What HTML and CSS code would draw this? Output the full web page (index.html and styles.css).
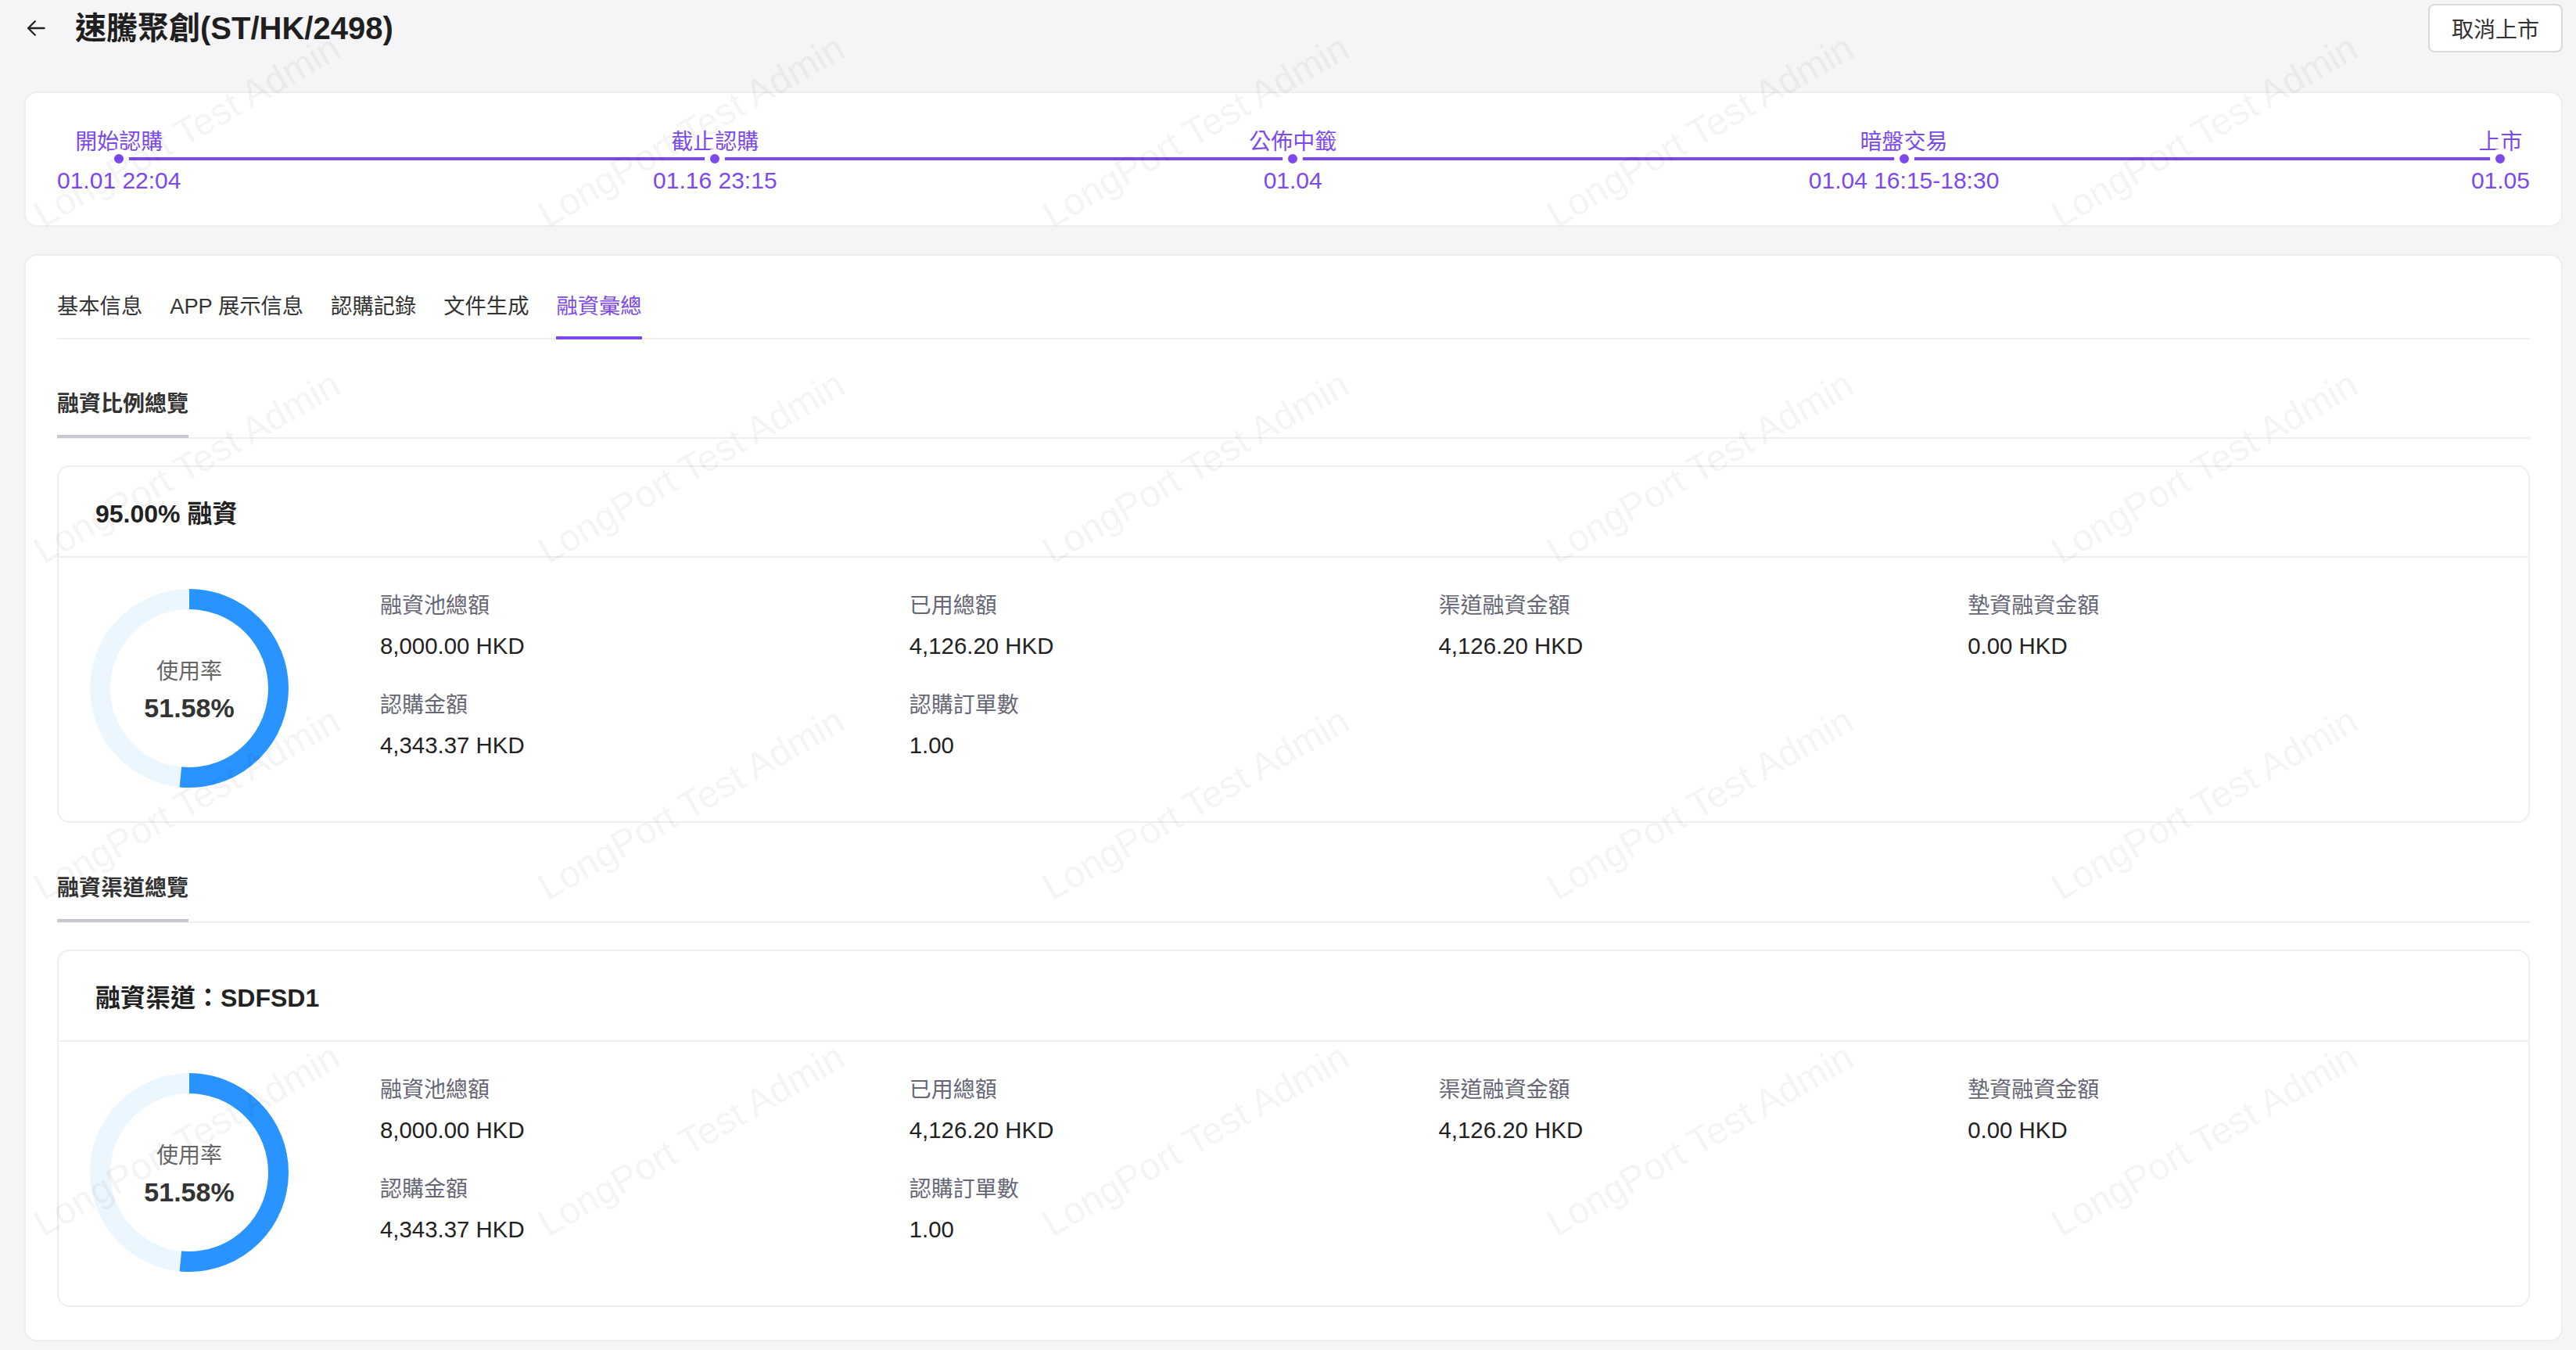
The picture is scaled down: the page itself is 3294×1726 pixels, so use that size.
FILE: index.html
```html
<!DOCTYPE html>
<html lang="zh-Hant">
<head>
<meta charset="utf-8">
<title>速騰聚創(ST/HK/2498)</title>
<link rel="stylesheet" href="styles.css">
</head>
<body>
<div class="page">
  <header class="topbar">
    <div class="topbar-left">
      <svg class="back" viewBox="0 0 24 24" aria-hidden="true"><path d="M21 12H3.5M11 4.5L3.5 12l7.5 7.5"/></svg>
      <h1 class="title">速騰聚創(ST/HK/2498)</h1>
    </div>
    <button class="btn">取消上市</button>
  </header>

  <section class="card timeline">
    <div class="tl-track">
      <div class="tl-item"><div class="tl-label">開始認購</div><div class="tl-dot"></div><div class="tl-date">01.01 22:04</div></div>
      <div class="tl-item"><div class="tl-label">截止認購</div><div class="tl-dot"></div><div class="tl-date">01.16 23:15</div></div>
      <div class="tl-item"><div class="tl-label">公佈中籤</div><div class="tl-dot"></div><div class="tl-date">01.04</div></div>
      <div class="tl-item"><div class="tl-label">暗盤交易</div><div class="tl-dot"></div><div class="tl-date">01.04 16:15-18:30</div></div>
      <div class="tl-item"><div class="tl-label">上市</div><div class="tl-dot"></div><div class="tl-date">01.05</div></div>
    </div>
  </section>

  <section class="card main">
    <nav class="tabs">
      <span class="tab">基本信息</span>
      <span class="tab">APP 展示信息</span>
      <span class="tab">認購記錄</span>
      <span class="tab">文件生成</span>
      <span class="tab active">融資彙總</span>
    </nav>

    <div class="sec-head"><span class="sec-title">融資比例總覽</span></div>
    <div class="fin-card">
      <div class="fin-head">95.00% 融資</div>
      <div class="fin-body">
        <div class="donut">
          <svg class="donut-svg" viewBox="0 0 254 254" aria-hidden="true">
            <circle class="donut-track" cx="127" cy="127" r="114"/>
            <circle class="donut-bar" cx="127" cy="127" r="114" pathLength="100" stroke-dasharray="51.58 100" transform="rotate(-90 127 127)"/>
          </svg>
          <div class="donut-text"><div class="donut-label">使用率</div><div class="donut-value">51.58%</div></div>
        </div>
        <div class="stats">
          <div class="stat"><div class="stat-label">融資池總額</div><div class="stat-value">8,000.00 HKD</div></div>
          <div class="stat"><div class="stat-label">已用總額</div><div class="stat-value">4,126.20 HKD</div></div>
          <div class="stat"><div class="stat-label">渠道融資金額</div><div class="stat-value">4,126.20 HKD</div></div>
          <div class="stat"><div class="stat-label">墊資融資金額</div><div class="stat-value">0.00 HKD</div></div>
          <div class="stat"><div class="stat-label">認購金額</div><div class="stat-value">4,343.37 HKD</div></div>
          <div class="stat"><div class="stat-label">認購訂單數</div><div class="stat-value">1.00</div></div>
        </div>
      </div>
    </div>

    <div class="sec-head sec-gap"><span class="sec-title">融資渠道總覽</span></div>
    <div class="fin-card">
      <div class="fin-head">融資渠道：SDFSD1</div>
      <div class="fin-body">
        <div class="donut">
          <svg class="donut-svg" viewBox="0 0 254 254" aria-hidden="true">
            <circle class="donut-track" cx="127" cy="127" r="114"/>
            <circle class="donut-bar" cx="127" cy="127" r="114" pathLength="100" stroke-dasharray="51.58 100" transform="rotate(-90 127 127)"/>
          </svg>
          <div class="donut-text"><div class="donut-label">使用率</div><div class="donut-value">51.58%</div></div>
        </div>
        <div class="stats">
          <div class="stat"><div class="stat-label">融資池總額</div><div class="stat-value">8,000.00 HKD</div></div>
          <div class="stat"><div class="stat-label">已用總額</div><div class="stat-value">4,126.20 HKD</div></div>
          <div class="stat"><div class="stat-label">渠道融資金額</div><div class="stat-value">4,126.20 HKD</div></div>
          <div class="stat"><div class="stat-label">墊資融資金額</div><div class="stat-value">0.00 HKD</div></div>
          <div class="stat"><div class="stat-label">認購金額</div><div class="stat-value">4,343.37 HKD</div></div>
          <div class="stat"><div class="stat-label">認購訂單數</div><div class="stat-value">1.00</div></div>
        </div>
      </div>
    </div>
  </section>
</div>

<div class="wm-layer" aria-hidden="true">
  <div class="wm-grid">
    <div class="wm-cell"><span>LongPort Test Admin</span></div><div class="wm-cell"><span>LongPort Test Admin</span></div><div class="wm-cell"><span>LongPort Test Admin</span></div><div class="wm-cell"><span>LongPort Test Admin</span></div><div class="wm-cell"><span>LongPort Test Admin</span></div>
    <div class="wm-cell"><span>LongPort Test Admin</span></div><div class="wm-cell"><span>LongPort Test Admin</span></div><div class="wm-cell"><span>LongPort Test Admin</span></div><div class="wm-cell"><span>LongPort Test Admin</span></div><div class="wm-cell"><span>LongPort Test Admin</span></div>
    <div class="wm-cell"><span>LongPort Test Admin</span></div><div class="wm-cell"><span>LongPort Test Admin</span></div><div class="wm-cell"><span>LongPort Test Admin</span></div><div class="wm-cell"><span>LongPort Test Admin</span></div><div class="wm-cell"><span>LongPort Test Admin</span></div>
    <div class="wm-cell"><span>LongPort Test Admin</span></div><div class="wm-cell"><span>LongPort Test Admin</span></div><div class="wm-cell"><span>LongPort Test Admin</span></div><div class="wm-cell"><span>LongPort Test Admin</span></div><div class="wm-cell"><span>LongPort Test Admin</span></div>
  </div>
</div>
</body>
</html>
```

FILE: styles.css
```css
html, body {
  margin: 0;
  padding: 0;
  overflow: hidden;
}
body {
  position: relative;
  min-height: 1726px;
  background: #f5f5f7;
  font-family: "Liberation Sans", "Noto Sans CJK TC", sans-serif;
  color: #222;
}
.page {
  padding: 5px 17px 0 31px;
}

/* top bar */
.topbar {
  display: flex;
  align-items: center;
  justify-content: space-between;
  height: 62px;
  margin-bottom: 50px;
}
.topbar-left {
  display: flex;
  align-items: center;
}
.back {
  width: 28px;
  height: 28px;
  margin-left: 1px;
  margin-right: 36px;
  fill: none;
  stroke: #222;
  stroke-width: 2;
  stroke-linecap: round;
  stroke-linejoin: round;
}
.title {
  margin: 0;
  font-size: 40px;
  font-weight: 600;
  line-height: 62px;
  color: #1f1f1f;
}
.btn {
  height: 62px;
  padding: 0 28px;
  background: #fff;
  border: 2px solid #d9d9d9;
  border-radius: 8px;
  font-family: inherit;
  font-size: 28px;
  color: #333;
}

/* cards */
.card {
  background: #fff;
  border: 2px solid #eeeeee;
  border-radius: 16px;
}

/* timeline */
.timeline {
  padding: 45px 40px 42px;
}
.tl-track {
  position: relative;
  display: flex;
  justify-content: space-between;
}
.tl-track::before {
  content: "";
  position: absolute;
  left: 79px;
  right: 38px;
  top: 37px;
  height: 4px;
  background: #7b49ec;
}
.tl-item {
  display: flex;
  flex-direction: column;
  align-items: center;
  color: #7b49ec;
}
.tl-label {
  padding-top: 4px;
  font-size: 28px;
  line-height: 28px;
  white-space: nowrap;
}
.tl-dot {
  position: relative;
  width: 12px;
  height: 12px;
  margin-top: -6px;
  border: 7px solid #fff;
  border-radius: 50%;
  background: #7b49ec;
}
.tl-date {
  font-size: 30px;
  line-height: 30px;
  white-space: nowrap;
}

/* main card */
.main {
  margin-top: 35px;
  padding: 40px 40px 42px;
}
.tabs {
  display: flex;
  gap: 35px;
  box-shadow: inset 0 -2px 0 #efefef;
}
.tab {
  font-size: 27.3px;
  line-height: 42px;
  padding-top: 4px;
  padding-bottom: 17px;
  border-bottom: 4px solid transparent;
  color: #333;
  white-space: nowrap;
}
.tab.active {
  color: #7b49ec;
  border-bottom-color: #7b49ec;
}

.sec-head {
  margin-top: 59px;
  border-bottom: 2px solid #efefef;
  height: 66px;
}
.sec-gap {
  margin-top: 60px;
}
.sec-title {
  display: inline-block;
  font-size: 28px;
  line-height: 42px;
  font-weight: 700;
  color: #333;
  padding-top: 3px;
  padding-bottom: 18px;
  border-bottom: 4px solid #c5c8cc;
}

.fin-card {
  margin-top: 34px;
  border: 2px solid #eeeeee;
  border-radius: 16px;
}
.fin-head {
  display: flex;
  align-items: center;
  height: 114px;
  padding: 0 47px;
  border-bottom: 2px solid #efefef;
  font-size: 32px;
  font-weight: 600;
  color: #222;
}
.fin-body {
  display: flex;
  align-items: flex-start;
  padding: 40px 40px 43px;
}

/* donut */
.donut {
  display: grid;
  width: 254px;
  height: 254px;
  flex: none;
}
.donut-svg,
.donut-text {
  grid-area: 1 / 1;
}
.donut-svg {
  width: 254px;
  height: 254px;
}
.donut-track {
  fill: none;
  stroke: #ecf6ff;
  stroke-width: 26;
}
.donut-bar {
  fill: none;
  stroke: #2994ff;
  stroke-width: 26;
}
.donut-text {
  display: flex;
  flex-direction: column;
  align-items: center;
  justify-content: center;
  padding-top: 6px;
}
.donut-label {
  font-size: 28px;
  line-height: 36px;
  color: #666;
}
.donut-value {
  margin-top: 8px;
  font-size: 34px;
  line-height: 40px;
  font-weight: 700;
  color: #333;
}

/* stats */
.stats {
  flex: 1;
  display: grid;
  grid-template-columns: repeat(4, 1fr);
  row-gap: 34px;
  margin-left: 117px;
  margin-top: 1px;
}
.stat-label {
  font-size: 28px;
  line-height: 42px;
  color: #666675;
  white-space: nowrap;
}
.stat-value {
  margin-top: 9px;
  font-size: 29.4px;
  line-height: 42px;
  color: #222;
  white-space: nowrap;
}

/* watermark overlay */
.wm-layer {
  position: absolute;
  inset: 0;
  overflow: hidden;
  pointer-events: none;
}
.wm-grid {
  display: grid;
  grid-template-columns: repeat(5, 645px);
  grid-auto-rows: 430px;
  margin-left: 56px;
  margin-top: -130px;
}
.wm-cell {
  display: flex;
  align-items: flex-end;
}
.wm-cell span {
  font-family: "Liberation Sans", sans-serif;
  font-size: 48px;
  line-height: 48px;
  white-space: nowrap;
  color: rgba(0, 0, 0, 0.045);
  transform-origin: 0 85%;
  transform: rotate(-30deg);
}
```
